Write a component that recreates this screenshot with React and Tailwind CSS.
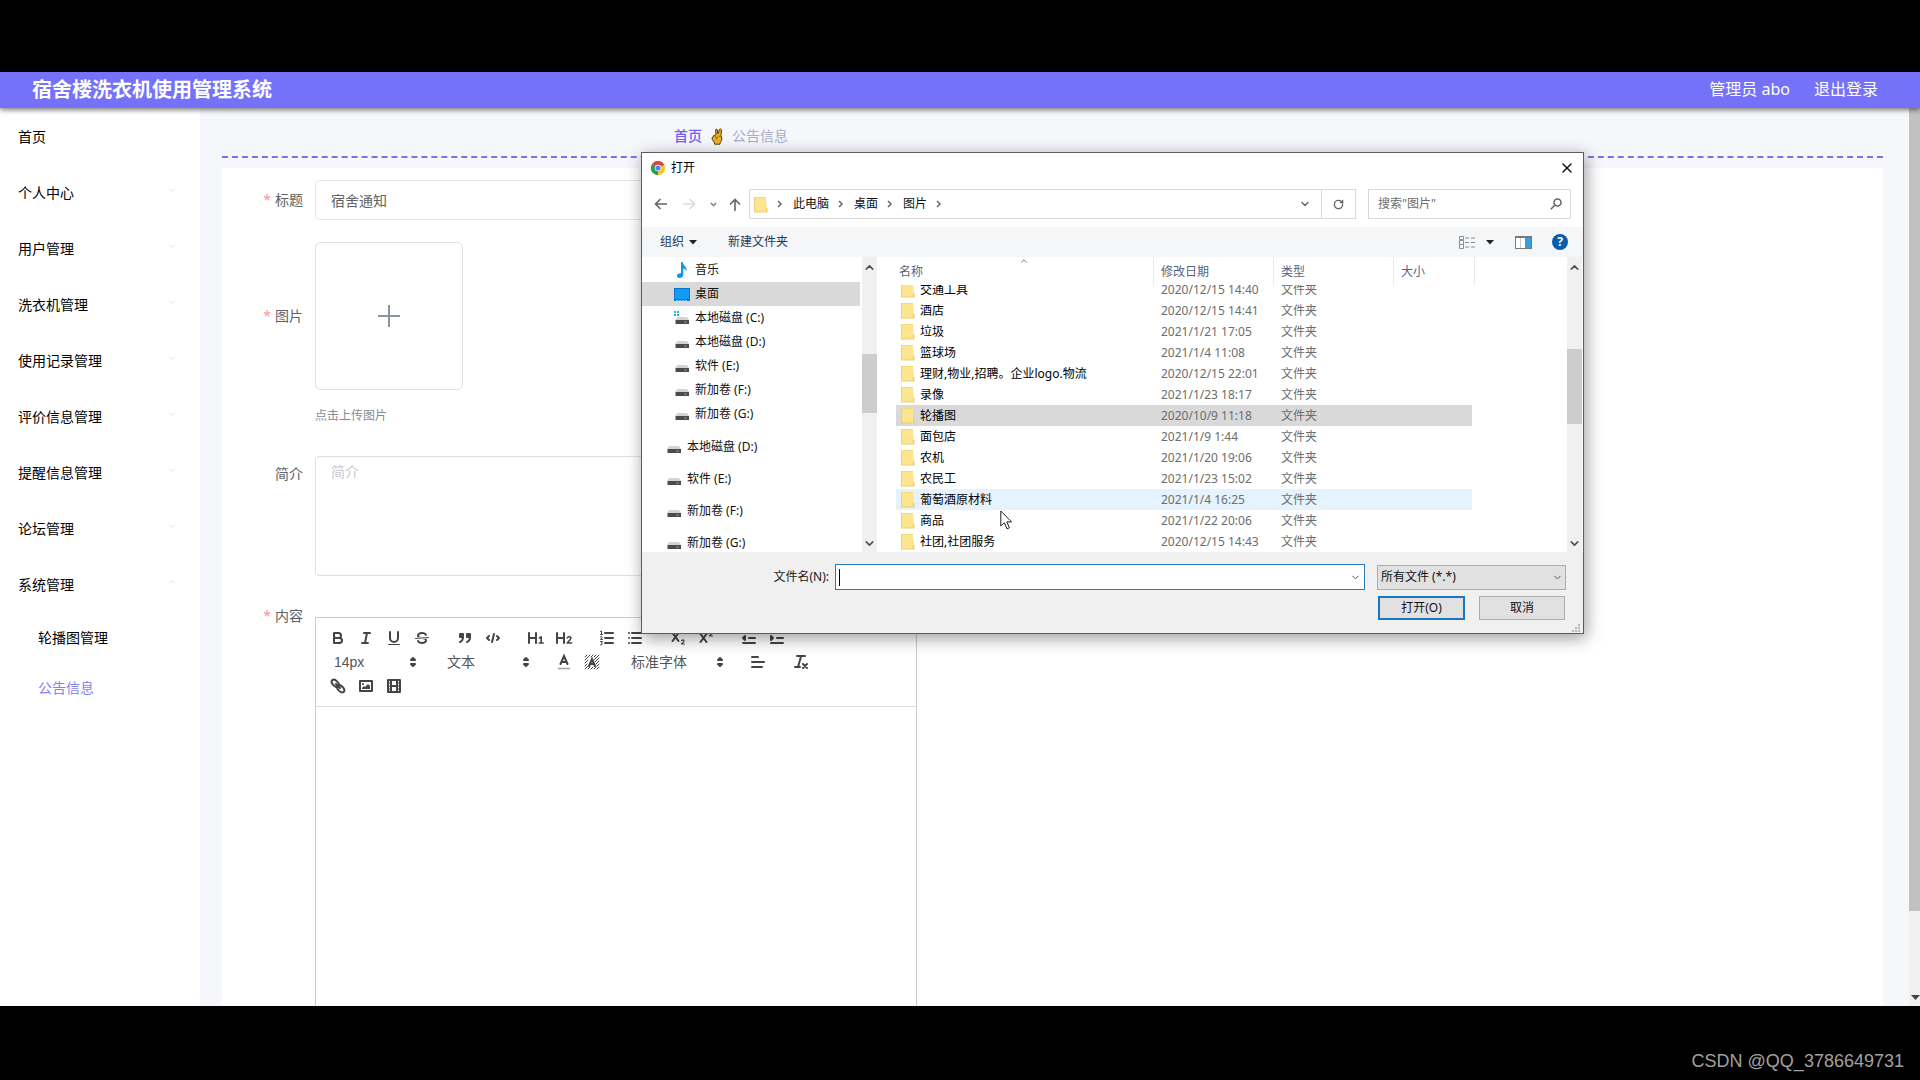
import { ChevronDown, ChevronUp, X, RotateCw } from "lucide-react";

const menus = [
  "首页",
  "个人中心",
  "用户管理",
  "洗衣机管理",
  "使用记录管理",
  "评价信息管理",
  "提醒信息管理",
  "论坛管理",
  "系统管理",
];

const files = [
  ["交通工具", "2020/12/15 14:40"],
  ["酒店", "2020/12/15 14:41"],
  ["垃圾", "2021/1/21 17:05"],
  ["篮球场", "2021/1/4 11:08"],
  ["理财,物业,招聘。企业logo.物流", "2020/12/15 22:01"],
  ["录像", "2021/1/23 18:17"],
  ["轮播图", "2020/10/9 11:18"],
  ["面包店", "2021/1/9 1:44"],
  ["农机", "2021/1/20 19:06"],
  ["农民工", "2021/1/23 15:02"],
  ["葡萄酒原材料", "2021/1/4 16:25"],
  ["商品", "2021/1/22 20:06"],
  ["社团,社团服务", "2020/12/15 14:43"],
];

const places = [
  ["音乐", "music"],
  ["桌面", "desktop"],
  ["本地磁盘 (C:)", "system"],
  ["本地磁盘 (D:)", "disk"],
  ["软件 (E:)", "disk"],
  ["新加卷 (F:)", "disk"],
  ["新加卷 (G:)", "disk"],
];

const drives = ["本地磁盘 (D:)", "软件 (E:)", "新加卷 (F:)", "新加卷 (G:)"];

const Header = () => (
  <header className="relative z-10 flex h-9 shrink-0 items-center justify-between bg-[#7571f9] pr-[42px] pb-px pl-8 text-white shadow-[0_2px_5px_rgba(0,0,0,0.5)]">
    <h1 className="text-xl leading-6 font-bold">宿舍楼洗衣机使用管理系统</h1>
    <div className="flex gap-6 pb-px text-base leading-6">
      <span>管理员 abo</span>
      <a href="#logout">退出登录</a>
    </div>
  </header>
);

const Sidebar = () => (
  <nav className="w-[200px] shrink-0 bg-white pt-px text-sm text-black">
    {menus.map((name, i) => (
      <a key={name} href="#menu" className="flex h-14 items-center justify-between pl-[18px] pr-[23px]">
        <span>{name}</span>
        {i > 0 && i < 8 && <ChevronDown size={10} className="mb-1.5 text-[#dcdde2]" />}
        {i === 8 && <ChevronUp size={10} className="mb-1.5 text-[#dcdde2]" />}
      </a>
    ))}
    <a href="#carousel" className="flex h-[50px] items-center pl-[38px]">轮播图管理</a>
    <a href="#notice" className="flex h-[50px] items-center pl-[38px] text-[#8580f8]">公告信息</a>
  </nav>
);

const VictoryHand = () => (
  <svg width="12" height="17" viewBox="0 0 12 17" aria-hidden="true">
    <path
      d="M2 9 L2.6 7.6 L5 7 L4.6 1.8 Q5 .7 6.2 1.4 L7 6 L8.6 1.2 Q9.8 .4 10.5 1.6 L10 7.5 L10.8 10 Q11 13 9.2 14.6 L9 16.2 H3.6 L3.2 14 Q.8 12 1 9.8 Z"
      fill="#f2b01e"
      stroke="#54401a"
    />
    <path d="M3.4 8.8 L6.8 9.4 L5 11.6 M7.4 8 L9.8 8.6" fill="none" stroke="#8c6411" />
  </svg>
);

const Tool = ({ label, children }) => (
  <button type="button" aria-label={label} className="h-6 w-7 px-[5px] py-[3px]">
    <svg viewBox="0 0 18 18" width="18" height="18" fill="none" stroke="#444" strokeWidth="2" strokeLinecap="round" strokeLinejoin="round">
      {children}
    </svg>
  </button>
);

const Picker = ({ label, value, wide }) => (
  <label className="relative mr-[15px] block h-6">
    <select
      aria-label={label}
      className={
        "h-6 appearance-none bg-transparent pl-2.5 text-sm leading-6 text-[#555] outline-none " + (wide ? "w-[108px]" : "w-[98px]")
      }
    >
      <option>{value}</option>
    </select>
    <svg viewBox="0 0 18 18" width="18" height="18" className="pointer-events-none absolute top-[3px] right-0" fill="#444" stroke="#444" strokeWidth="2" strokeLinejoin="round">
      <polygon points="7 11 9 13 11 11" />
      <polygon points="7 7 9 5 11 7" />
    </svg>
  </label>
);

const Group = ({ children }) => <div className="mr-[15px] flex">{children}</div>;

const EditorToolbar = () => (
  <div className="border-b border-[#ddd] p-2 font-['Liberation_Sans','Noto_Sans_CJK_SC',sans-serif]">
    <div className="flex">
      <Group>
        <Tool label="bold">
          <path d="M5 4H9.5A2.5 2.5 0 0 1 9.5 9H5Z" />
          <path d="M5 9h5.5A2.5 2.5 0 0 1 10.5 14H5Z" />
        </Tool>
        <Tool label="italic">
          <path d="M7 4H13M5 14H11M8 14L10 4" />
        </Tool>
        <Tool label="underline">
          <path d="M5 3V9a4 4 0 0 0 8 0V3" />
          <path d="M3.5 15.5H14.5" strokeWidth="1" />
        </Tool>
        <Tool label="strike">
          <path d="M15.5 8.5L2.5 9.5" strokeWidth="1" />
          <path
            stroke="none"
            fill="#444"
            d="M9 8C6.5 7.8 6 7.5 6 6.5 6 5.8 7.3 5 9 5c1.6 0 2.8.7 3 1.3a1 1 0 0 0 1.9-.6C13.4 4.1 11.4 3 9 3 6.2 3 4 4.5 4 6.5a3.2 3.2 0 0 0 .5 1.8ZM9 10C11.5 10.2 12 10.5 12 11.5c0 .7-1.3 1.5-3 1.5-1.6 0-2.8-.7-3-1.3a1 1 0 1 0-1.9.6C4.6 13.9 6.6 15 9 15c2.8 0 5-1.5 5-3.5a3.2 3.2 0 0 0-.5-1.8Z"
          />
        </Tool>
      </Group>
      <Group>
        <Tool label="blockquote">
          <rect x="4" y="5" width="3" height="3" fill="#444" />
          <rect x="11" y="5" width="3" height="3" fill="#444" />
          <path d="M7 8c0 4-3 5-3 5M14 8c0 4-3 5-3 5" />
        </Tool>
        <Tool label="code">
          <path d="M5 7L3 9L5 11M13 7L15 9L13 11M10 5L8 13" />
        </Tool>
      </Group>
      <Group>
        <Tool label="header 1">
          <path d="M2 4V14M9 4V14M2 9H9" />
          <path d="M12.4 9L14.2 7.8V14M12.2 14H16.2" strokeWidth="1.6" />
        </Tool>
        <Tool label="header 2">
          <path d="M2 4V14M9 4V14M2 9H9" />
          <path d="M12.3 8.8Q14 7 15.8 8.4Q16.6 9.6 12.2 14H16.6" strokeWidth="1.6" />
        </Tool>
      </Group>
      <Group>
        <Tool label="ordered list">
          <path d="M7 4H15M7 9H15M7 14H15" />
          <path d="M2.5 2.5L3.5 2V5.5M2.5 5.5H4.5M2.5 8Q4.5 7 4.3 8.4L2.5 10.5H4.5M2.5 12.5H4.5L3.3 14Q5 14.5 4 15.6L2.5 16" strokeWidth="1" />
        </Tool>
        <Tool label="bullet list">
          <path d="M6 4H15M6 9H15M6 14H15M3 4H3M3 9H3M3 14H3" />
        </Tool>
      </Group>
      <Group>
        <Tool label="subscript">
          <path d="M3.5 4L9.5 12M9.5 4L3.5 12" />
          <path d="M12.5 11.6Q14 10.3 15 11.5Q15.2 12.4 12.5 15H15.5" strokeWidth="1.2" />
        </Tool>
        <Tool label="superscript">
          <path d="M3.5 5L9.5 13M9.5 5L3.5 13" />
          <path d="M12.5 3.6Q14 2.3 15 3.5Q15.2 4.4 12.5 7H15.5" strokeWidth="1.2" />
        </Tool>
      </Group>
      <Group>
        <Tool label="outdent">
          <path d="M3 14H15M3 4H15M9 9H15" />
          <path d="M5 7V11L3 9Z" fill="#444" />
        </Tool>
        <Tool label="indent">
          <path d="M3 14H15M3 4H15M9 9H15" />
          <path d="M3 7V11L5 9Z" fill="#444" />
        </Tool>
      </Group>
    </div>
    <div className="flex">
      <Picker label="字号" value="14px" />
      <Picker label="标题级别" value="文本" />
      <Group>
        <Tool label="color">
          <path d="M3.5 15.5H14.5" strokeWidth="1.5" opacity=".5" />
          <path d="M5.5 11L9 3L12.5 11M6.5 9H11.5" strokeLinejoin="miter" />
        </Tool>
        <Tool label="background">
          <path
            d="M2 4L4 2M2 7L7 2M2 10L5 7M2 13L4 11M2 16L5 13M5 16L7 14M8 16L10 14M11 16L13 14M14 16L16 14M14 13L16 11M13 11L16 8M12 9L16 5M11 7L16 2M11 4L13 2M8 4L10 2"
            strokeWidth="1"
          />
          <path d="M6 13L9 6L12 13M7 11H11" strokeLinejoin="miter" />
        </Tool>
      </Group>
      <Picker label="字体" value="标准字体" wide />
      <Group>
        <Tool label="align">
          <path d="M3 9H15M3 14H13M3 4H9" />
        </Tool>
      </Group>
      <Group>
        <Tool label="clean">
          <path d="M5 3H13M6 14L9 3.5M3 14H8" />
          <path d="M11 11L15 15M15 11L11 15" />
        </Tool>
      </Group>
    </div>
    <div className="flex">
      <Tool label="link">
        <ellipse cx="6.2" cy="6.2" rx="2.6" ry="4.2" transform="rotate(-45 6.2 6.2)" />
        <ellipse cx="11.8" cy="11.8" rx="2.6" ry="4.2" transform="rotate(-45 11.8 11.8)" />
        <path d="M7 7L11 11" />
      </Tool>
      <Tool label="image">
        <rect x="3" y="4" width="12" height="10" />
        <circle cx="6" cy="7" r="1" fill="#444" stroke="none" />
        <path d="M5 12V11L7 9L8 10L11 7L13 9V12Z" fill="#444" stroke="none" />
      </Tool>
      <Tool label="video">
        <rect x="3" y="3" width="12" height="12" />
        <path d="M6 3V15M12 3V15M6 9H12" />
        <path d="M3 6H5M3 9H5M3 12H5M13 6H15M13 9H15M13 12H15" strokeWidth="1" />
      </Tool>
    </div>
  </div>
);

const Label = ({ required, htmlFor, children }) => (
  <label htmlFor={htmlFor} className="block w-[93px] shrink-0 pr-3 text-right text-sm leading-10 text-[#606266]">
    {required && <span className="mr-1 text-[#f79a9a]">*</span>}
    {children}
  </label>
);

const NoticeForm = () => (
  <form className="flex flex-1 flex-col bg-white pt-3">
    <div className="flex">
      <Label required htmlFor="title">标题</Label>
      <input
        id="title"
        defaultValue="宿舍通知"
        className="h-10 w-[601px] rounded border border-[#e4e6ea] px-[15px] text-sm text-[#606266] outline-none"
      />
    </div>
    <div className="mt-[22px] flex items-start">
      <div className="pt-[54px]">
        <Label required htmlFor="upload">图片</Label>
      </div>
      <div>
        <button
          id="upload"
          type="button"
          aria-label="上传图片"
          className="flex size-[148px] items-center justify-center rounded-md border border-[#dfe0e4]"
        >
          <svg width="24" height="24" viewBox="0 0 24 24" stroke="#8c939d" strokeWidth="2">
            <path d="M1 12H23M12 1V23" />
          </svg>
        </button>
        <p className="mt-4 text-xs leading-5 text-[#858b99]">点击上传图片</p>
      </div>
    </div>
    <div className="mt-7 flex items-start">
      <Label htmlFor="intro">简介</Label>
      <textarea
        id="intro"
        placeholder="简介"
        className="mt-0.5 h-[120px] w-[601px] resize-none rounded-sm border border-[#dfe0e4] px-[15px] py-[5px] text-sm placeholder:text-[#c8cad2] outline-none"
      />
    </div>
    <div className="mt-5 flex flex-1">
      <Label required htmlFor="content">内容</Label>
      <div className="mt-[21px] flex w-[602px] flex-col border border-b-0 border-[#ccc]">
        <EditorToolbar />
        <textarea id="content" aria-label="内容" className="min-h-[200px] flex-1 resize-none p-4 outline-none" />
      </div>
    </div>
  </form>
);

const ChromeLogo = () => (
  <svg width="14" height="14" viewBox="0 0 14 14" aria-hidden="true">
    <circle cx="7" cy="7" r="7" fill="#fbc116" />
    <path d="M7 7L.9 3.5A7 7 0 0 1 13.1 3.5Z" fill="#db4437" />
    <path d="M7 7L.9 3.5A7 7 0 0 0 7 14Z" fill="#1da05b" />
    <path d="M7 7L13.1 3.5H7Z" fill="#db4437" />
    <circle cx="7" cy="7" r="3.3" fill="#fff" />
    <circle cx="7" cy="7" r="2.6" fill="#4a86f0" />
  </svg>
);

const Folder = () => (
  <svg width="14" height="17" viewBox="0 0 14 17" aria-hidden="true" className="shrink-0">
    <path d="M1 1H12L12.5 12H13.5V16.5H1Z" fill="#f0cf66" />
    <path d="M1 1.5H12V15.5H1Z" fill="#fde58f" />
    <path d="M.5 1V16.5" stroke="#ecd07a" />
  </svg>
);

const PlaceIcon = ({ kind }) => {
  if (kind === "music")
    return (
      <svg width="16" height="18" viewBox="0 0 16 18" aria-hidden="true">
        <path d="M7 1H8.6C9 4.5 13.4 5.5 12.6 10.6C12 8.5 10.6 7.6 9.3 7.6V14Q9 17 5.5 17Q2.5 16.6 3 14Q4 11.8 7 12.2Z" fill="#1493e8" />
      </svg>
    );
  if (kind === "desktop")
    return (
      <svg width="16" height="18" viewBox="0 0 16 18" aria-hidden="true">
        <rect y="3" width="16" height="13" fill="#0877c9" />
        <path d="M1 4H15V14H1Z" fill="#139cf5" />
        <path d="M2 15.5H14" stroke="#8ad0ff" strokeDasharray="2 1" />
      </svg>
    );
  return (
    <svg width="16" height="18" viewBox="0 0 16 18" aria-hidden="true">
      {kind === "system" && <path d="M0 2H2V4H0ZM3 2H5V4H3ZM0 5H2V7H0ZM3 5H5V7H3Z" fill="#21b7dd" />}
      <path d="M3 8H13L15 11H1.5Z" fill="#d3d3d3" />
      <rect x="1.5" y="11" width="13.5" height="4" fill="#4b4b4b" />
      <path d="M10 13H13" stroke="#8a9a8a" />
    </svg>
  );
};

const ScrollBar = ({ children }) => (
  <div className="flex w-[15px] shrink-0 flex-col items-center bg-[#f0f0f0] pt-1 pb-0.5 text-[#505050]">
    <ChevronUp size={13} strokeWidth={3} className="shrink-0" />
    {children}
    <ChevronDown size={13} strokeWidth={3} className="mt-auto shrink-0" />
  </div>
);

const Crumb = ({ children }) => (
  <>
    <span className="ml-2.5">{children}</span>
    <Arrow />
  </>
);

const Arrow = () => (
  <svg width="6" height="8" viewBox="0 0 6 8" className="ml-[9px]" fill="none" stroke="#666" strokeWidth="1.5" aria-hidden="true">
    <path d="M1 1L4 4L1 7" />
  </svg>
);

const Caret = () => (
  <svg width="8" height="5" viewBox="0 0 8 5" fill="#222" aria-hidden="true">
    <path d="M0 0H8L4 4.5Z" />
  </svg>
);

const AddressBar = () => (
  <div className="flex h-[30px] items-center pl-3 pr-3">
    <button type="button" aria-label="后退" className="w-3.5">
      <svg width="13" height="12" viewBox="0 0 13 12" fill="none" stroke="#666" strokeWidth="1.6">
        <path d="M13 6H1.5M6.5 1L1.5 6L6.5 11" />
      </svg>
    </button>
    <button type="button" aria-label="前进" className="ml-[15px] w-3.5">
      <svg width="13" height="12" viewBox="0 0 13 12" fill="none" stroke="#dcdcdc" strokeWidth="1.6">
        <path d="M0 6H11.5M6.5 1L11.5 6L6.5 11" />
      </svg>
    </button>
    <button type="button" aria-label="最近位置" className="ml-3">
      <ChevronDown size={9} strokeWidth={4} color="#888" />
    </button>
    <button type="button" aria-label="上移" className="ml-[11px] w-3.5">
      <svg width="12" height="13" viewBox="0 0 12 13" fill="none" stroke="#666" strokeWidth="1.6">
        <path d="M6 13V1.5M1 6.5L6 1.5L11 6.5" />
      </svg>
    </button>
    <div className="ml-1.5 flex h-full flex-1 items-center border border-[#d9d9d9] pl-1 text-[#111]">
      <Folder />
      <Arrow />
      <Crumb>此电脑</Crumb>
      <Crumb>桌面</Crumb>
      <Crumb>图片</Crumb>
      <ChevronDown size={12} strokeWidth={3} color="#666" className="mr-2.5 ml-auto" />
      <button type="button" aria-label="刷新" className="flex h-full w-[34px] items-center justify-center border-l border-[#d9d9d9]">
        <RotateCw size={11} strokeWidth={3} color="#666" />
      </button>
    </div>
    <label className="ml-3 flex h-full w-[203px] items-center border border-[#d9d9d9] pr-2 pl-[9px]">
      <input aria-label="搜索" placeholder='搜索"图片"' className="min-w-0 flex-1 outline-none placeholder:text-[#6d6d6d]" />
      <svg width="12" height="12" viewBox="0 0 12 12" fill="none" stroke="#666" strokeWidth="1.6" aria-hidden="true">
        <circle cx="7.5" cy="4.5" r="3.5" />
        <path d="M5 7L.8 11.2" />
      </svg>
    </label>
  </div>
);

const CommandBar = () => (
  <div className="mt-2 flex h-[30px] items-center bg-[#f5f6f7] pr-[15px] pl-[18px] text-[#1e395b]">
    <button type="button" className="flex items-center gap-[5px]">
      组织 <Caret />
    </button>
    <button type="button" className="ml-[31px]">新建文件夹</button>
    <button type="button" aria-label="更改视图" className="ml-auto flex items-center gap-2.5">
      <svg width="17" height="13" viewBox="0 0 17 13" fill="none" stroke="#8b8f95">
        <path d="M.5 .5H4.5V3.5H.5ZM.5 4.5H4.5V8.5H.5ZM.5 8.5H4.5V12.5H.5Z" />
        <path d="M6 2H10M12 2H16M6 6.5H10M12 6.5H16M6 11H10M12 11H16" />
      </svg>
      <Caret />
    </button>
    <button type="button" aria-label="预览窗格" className="ml-[21px]">
      <svg width="17" height="13" viewBox="0 0 17 13" className="block">
        <rect x=".5" y=".5" width="16" height="12" fill="#fff" stroke="#77797c" />
        <rect x="10" y="1" width="6" height="11" fill="#3a9be0" />
        <path d="M0 1H17" stroke="#77797c" strokeWidth="2" />
        <path d="M5.5 2V12" stroke="#ccc" />
      </svg>
    </button>
    <button type="button" aria-label="帮助" className="ml-5 flex size-4 items-center justify-center rounded-full bg-[#0a5cad] text-xs font-bold text-white">
      ?
    </button>
  </div>
);

const FileTable = () => (
  <table className="block flex-1 pl-[19px]">
    <thead className="relative z-10 block bg-white text-[#56647f]">
      <tr className="grid h-7 grid-cols-[258px_120px_120px_81px] text-left">
        <th className="relative border-r border-[#e8e8e8] pt-[7px] pl-[3px] font-normal">
          名称
          <ChevronUp size={10} strokeWidth={2} className="absolute -top-px left-[123px]" />
        </th>
        <th className="border-r border-[#e8e8e8] pt-[7px] pl-[7px] font-normal">修改日期</th>
        <th className="border-r border-[#e8e8e8] pt-[7px] pl-[7px] font-normal">类型</th>
        <th className="border-r border-[#e8e8e8] pt-[7px] pl-[7px] font-normal">大小</th>
      </tr>
    </thead>
    {/* list is scrolled, so the first row slides under the header */}
    <tbody className="-mt-1.5 block">
      {files.map(([name, date], i) => (
        <tr
          key={name}
          className={
            "grid h-[21px] w-[576px] grid-cols-[258px_120px_120px] items-center " +
            (i === 6 ? "bg-[#d9d9d9]" : i === 10 ? "bg-[#e5f3ff]" : "")
          }
        >
          <td className="flex items-center gap-[5px] pl-[5px] text-black">
            <Folder />
            {name}
          </td>
          <td className="pl-[7px] text-[#6d6d6d]">{date}</td>
          <td className="pl-[7px] text-[#6d6d6d]">文件夹</td>
        </tr>
      ))}
    </tbody>
  </table>
);

const OpenDialog = () => (
  <div
    role="dialog"
    aria-label="打开"
    className="absolute top-[152px] left-[641px] z-20 flex h-[482px] w-[943px] flex-col border border-[#5c5c5c] bg-white text-xs leading-4 shadow-[2px_4px_16px_rgba(0,0,0,0.4)]"
  >
    <div className="flex h-9 items-center pr-2 pb-1.5 pl-[9px]">
      <ChromeLogo />
      <span className="ml-1.5 text-black">打开</span>
      <button type="button" aria-label="关闭" className="ml-auto">
        <X size={16} strokeWidth={2} color="#111" />
      </button>
    </div>
    <AddressBar />
    <CommandBar />
    <div className="flex h-[295px] overflow-hidden pr-px">
      <div className="w-[220px] shrink-0 overflow-hidden pt-px text-[#111]">
        {places.map(([name, kind], i) => (
          <div key={name} className={"flex h-6 w-[218px] items-center gap-[5px] pl-8 " + (i === 1 ? "bg-[#d9d9d9]" : "")}>
            <PlaceIcon kind={kind} />
            {name}
          </div>
        ))}
        <div className="mt-[5px]">
          {drives.map((name) => (
            <div key={name} className="flex h-8 items-center gap-[5px] pl-6">
              <PlaceIcon kind="disk" />
              {name}
            </div>
          ))}
        </div>
      </div>
      <ScrollBar>
        <div className="mt-20 h-[59px] w-full bg-[#cdcdcd]" />
      </ScrollBar>
      <FileTable />
      <ScrollBar>
        <div className="mt-[75px] h-[75px] w-full bg-[#cdcdcd]" />
      </ScrollBar>
    </div>
    <div className="relative flex-1 bg-[#f0f0f0] pt-3 pr-[17px]">
      <div className="flex h-[26px] items-center">
        <label htmlFor="filename" className="w-[193px] pr-1.5 text-right text-[#222]">文件名(N):</label>
        <div className="flex h-full flex-1 items-center border border-[#2a7ab8] bg-white px-[3px]">
          {/* text caret of the focused field */}
          <span className="h-[17px] w-px bg-black" />
          <input id="filename" className="min-w-0 flex-1 outline-none" />
          <ChevronDown size={11} color="#444" />
        </div>
        <label className="relative ml-3 block h-[25px] w-[189px]">
          <select aria-label="文件类型" className="h-full w-full appearance-none border border-[#adadad] bg-[#e1e1e1] pl-[3px] text-[#111] outline-none">
            <option>所有文件 (*.*)</option>
          </select>
          <ChevronDown size={11} color="#444" className="pointer-events-none absolute top-[7px] right-[3px]" />
        </label>
      </div>
      <div className="mt-1.5 flex justify-end gap-3.5 pr-px text-[#111]">
        <button type="button" className="h-6 w-[87px] border-2 border-[#1976c5] bg-[#e1e1e1]">打开(O)</button>
        <button type="button" className="h-6 w-[86px] border border-[#adadad] bg-[#e1e1e1]">取消</button>
      </div>
      <svg width="9" height="9" viewBox="0 0 9 9" fill="#b5b5b5" className="absolute right-0.5 bottom-0" aria-hidden="true">
        <path d="M6 0H8V2H6ZM3 3H5V5H3ZM6 3H8V5H6ZM0 6H2V8H0ZM3 6H5V8H3ZM6 6H8V8H6Z" />
      </svg>
    </div>
    <svg width="14" height="21" viewBox="0 0 14 21" className="absolute top-[357px] left-[358px]" fill="#fff" stroke="#222" aria-hidden="true">
      <path d="M.8 1V16L4.4 12.8L7 18.8L9.4 17.8L6.9 11.9H11.6Z" />
    </svg>
  </div>
);

const App = () => {
  return (
    <div className="relative flex min-h-screen flex-col bg-black pt-[72px] font-['Noto_Sans','Noto_Sans_CJK_SC',sans-serif]">
      <Header />
      <div className="flex flex-1 bg-[#f6f7fa]">
        <Sidebar />
        <main className="flex flex-1 flex-col pr-[26px] pl-[22px]">
          <div className="mb-2.5 flex h-[50px] items-center gap-[9px] border-b-2 border-dashed border-[#7b72e8] pt-2 pl-[452px] text-sm">
            <a href="#home" className="font-medium text-[#6c5ff5]">首页</a>
            <VictoryHand />
            <span className="text-[#a5aecb]">公告信息</span>
          </div>
          <NoticeForm />
        </main>
        <div className="flex w-[11px] flex-col justify-between bg-[#f0f0f0] pb-1.5">
          <div className="h-[90%] bg-[#c1c1c1]" />
          <svg width="9" height="5" viewBox="0 0 9 5" fill="#444" className="self-end" aria-hidden="true">
            <path d="M0 0H9L4.5 5Z" />
          </svg>
        </div>
      </div>
      <footer className="flex h-[74px] items-center justify-end pt-9 pr-4 font-['Liberation_Sans',sans-serif] text-lg text-[#a0a0a0]">
        CSDN @QQ_3786649731
      </footer>
      <OpenDialog />
    </div>
  );
};

export default App;
